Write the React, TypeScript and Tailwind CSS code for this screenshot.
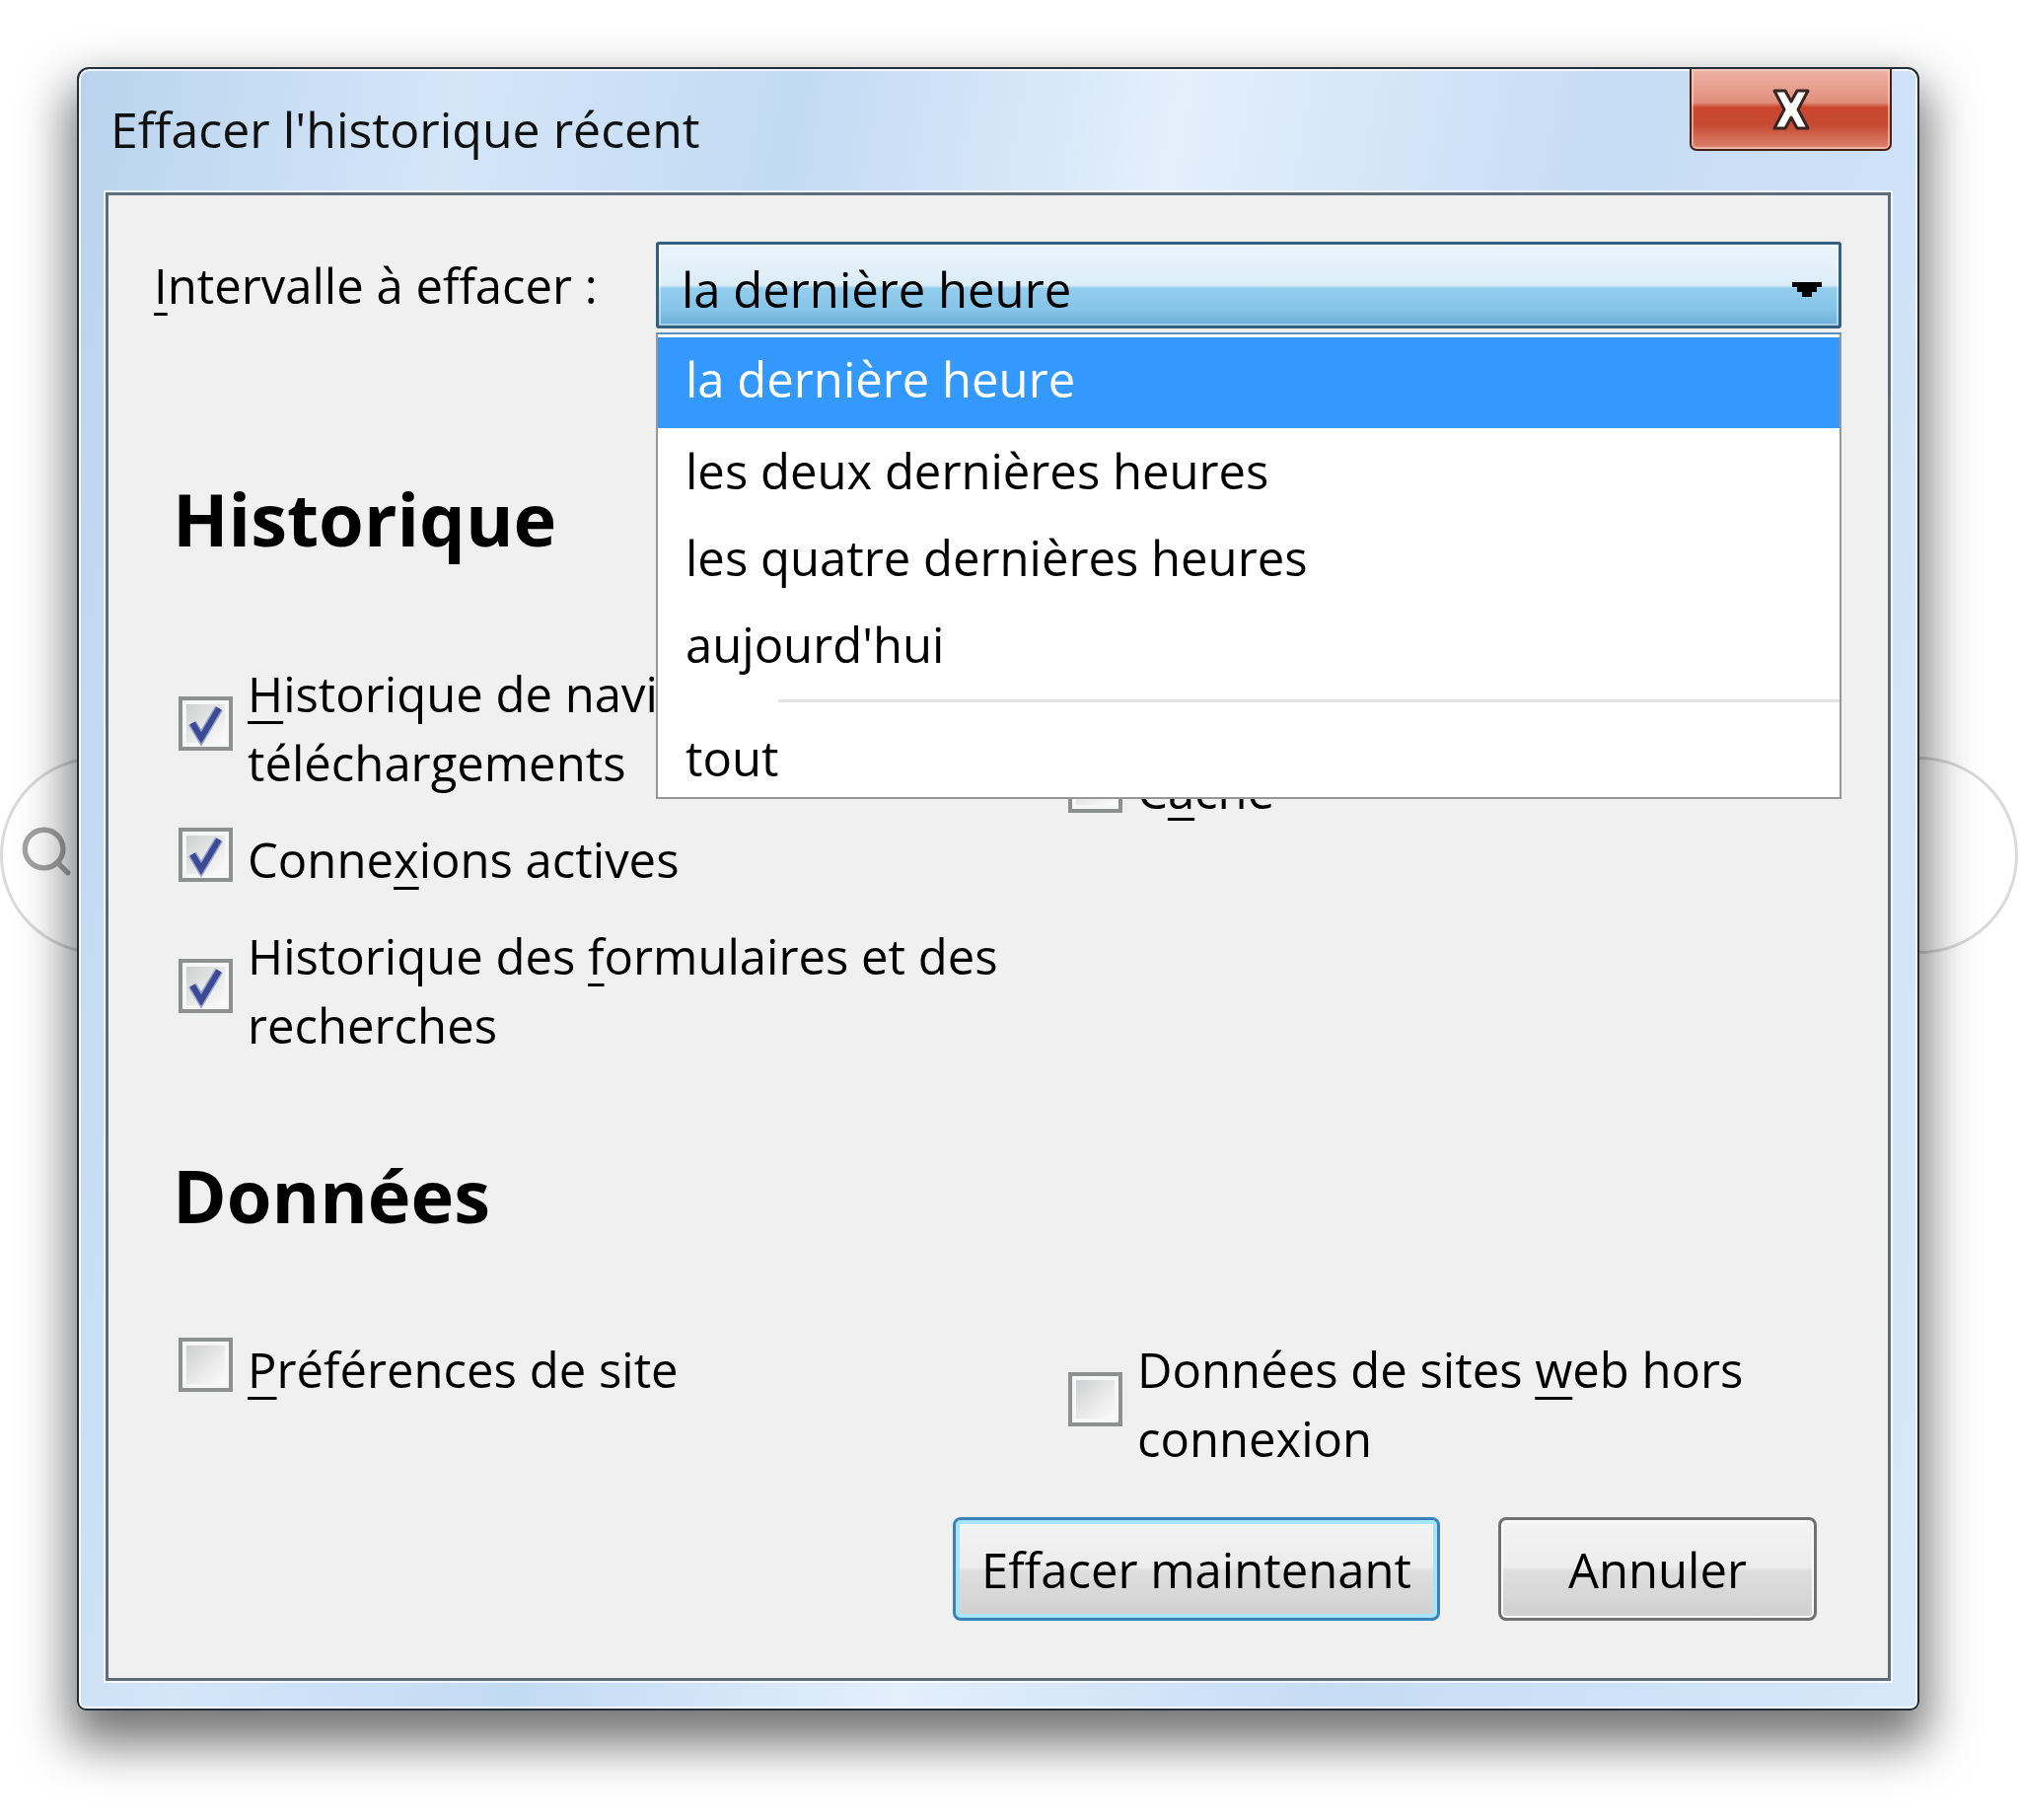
import { Search } from "lucide-react";
import type { ReactNode } from "react";

function Box({ checked }: { checked?: boolean }) {
  return (
    <span className="relative mb-[10px] flex h-[55px] w-[55px] shrink-0 border-[4px] border-[#8e8f8f] bg-[#f6f6f6] p-[4px]">
      <span className="h-full w-full bg-[linear-gradient(135deg,#cdcecf,#e9e9e9_55%,#fbfbfb)]" />
      {checked ? (
        <svg viewBox="0 0 47 47" className="absolute inset-0 h-[47px] w-[47px]">
          <path d="M10 23 L19 38 L37 8" fill="none" stroke="#9aa3cf" strokeWidth="9" strokeLinejoin="miter" />
          <path d="M10 23 L19 38 L37 8" fill="none" stroke="#3a4a95" strokeWidth="6" strokeLinejoin="miter" />
        </svg>
      ) : null}
    </span>
  );
}

function Option({ checked, children, textClass = "max-w-[800px]" }: { checked?: boolean; children: ReactNode; textClass?: string }) {
  return (
    <div className="flex items-center gap-[15px]">
      <Box checked={checked} />
      <span className={`leading-[70px] ${textClass}`}>{children}</span>
    </div>
  );
}

function Key({ children }: { children: ReactNode }) {
  return <u className="underline decoration-[3px] underline-offset-[9px]">{children}</u>;
}

function CloseButton() {
  return (
    <div className="flex h-[83px] w-[205px] items-center justify-center rounded-b-[7px] border-2 border-t-0 border-[#4a2119] bg-[linear-gradient(to_bottom,#eeb4a6_0%,#e08e7b_42%,#c9462c_48%,#c64b32_70%,#dd8471_100%)] shadow-[inset_0_0_0_2px_rgba(255,220,210,0.55)]">
      <svg viewBox="0 0 44 44" className="h-[44px] w-[44px]">
        <path d="M5 3 H16 L22 14 L28 3 H39 L29 22 L39 41 H28 L22 30 L16 41 H5 L15 22 Z" fill="#ffffff" stroke="#3b2522" strokeWidth="3" strokeLinejoin="round" />
      </svg>
    </div>
  );
}

function Dropdown() {
  return (
    <div className="relative w-[1202px]">
      <div className="flex h-[88px] items-center justify-between rounded-[3px] border-[3px] border-[#34607f] bg-[linear-gradient(to_bottom,#eaf5fc_0%,#dcedf8_50%,#92cdee_54%,#86c4e8_80%,#6cafd8_100%)] pl-[23px] pr-[17px] pt-[8px] shadow-[inset_0_0_0_2px_rgba(255,255,255,0.4)]">
        <span className="leading-[70px]">la dernière heure</span>
        <svg viewBox="0 0 30 15" className="h-[15px] w-[30px]">
          <path d="M0 0 H30 V5 H25 V10 H20 V15 H10 V10 H5 V5 H0 Z" fill="#000" />
        </svg>
      </div>
      <div className="absolute left-0 top-full z-10 mt-[4px] w-full border-2 border-[#979797] border-t-[#5a8fc4] bg-white pt-[3px]">
        <div className="flex h-[92px] items-center bg-[#3399ff] pb-[6px] pl-[28px] text-white">la dernière heure</div>
        <div className="flex h-[88px] items-center pl-[28px]">les deux dernières heures</div>
        <div className="flex h-[88px] items-center pl-[28px]">les quatre dernières heures</div>
        <div className="flex h-[88px] items-center pl-[28px]">aujourd'hui</div>
        <div className="ml-[122px] mt-[11px] h-[3px] bg-[#e3e3e3]" />
        <div className="flex h-[96px] items-center pl-[28px] pt-[18px]">tout</div>
      </div>
    </div>
  );
}

function Button({ children, primary, width }: { children: ReactNode; primary?: boolean; width: string }) {
  return (
    <button
      type="button"
      className={`flex h-[105px] items-center justify-center rounded-[8px] border-[3px] bg-[linear-gradient(to_bottom,#f4f4f4_0%,#ececec_48%,#dedede_52%,#d0d0d0_100%)] leading-[70px] text-black ${width} ${
        primary ? "border-[#3a83b8] shadow-[inset_0_0_0_4px_#a6e4f9]" : "border-[#707070] shadow-[inset_0_0_0_2px_#fbfbfb]"
      }`}
    >
      {children}
    </button>
  );
}

export default function App() {
  return (
    <div className="relative h-[1845px] w-[2048px] overflow-hidden bg-white pl-[78px] pt-[68px] font-['Open_Sans',sans-serif] text-[49px] text-black">
      {/* search box sitting behind the dialog */}
      <div className="absolute left-0 top-[767px] h-[200px] w-[2046px] rounded-full border-[3px] border-[#dadada]" />
      <Search className="absolute left-[18px] top-[834px] h-[58px] w-[58px] text-[#a3a3a3]" strokeWidth={2.2} />

      <div className="relative flex h-[1666px] w-[1868px] flex-col rounded-t-[12px] rounded-b-[9px] border-2 border-[#222d38] bg-[linear-gradient(100deg,#b9d3ee_0%,#d4e6f8_18%,#c2daf3_34%,#e3effb_52%,#c6dcf4_72%,#d6e8f9_100%)] shadow-[0_26px_50px_8px_rgba(0,0,0,0.55),inset_0_0_0_2px_rgba(255,255,255,0.75)]">
        <div className="flex h-[125px] items-start justify-between">
          <span className="ml-[32px] mt-[26px] text-[50px] leading-[70px] text-[#111]">Effacer l'historique récent</span>
          <div className="mr-[26px]">
            <CloseButton />
          </div>
        </div>

        <div className="mx-[27px] mb-[28px] flex flex-1 flex-col border-[3px] border-[#5f6d7b] bg-[#f0f0f0] pl-[46px] pr-[46px] pt-[47px] shadow-[0_0_0_2px_rgba(255,255,255,0.7)]">
          <div className="flex items-center">
            <span className="w-[509px] leading-[70px]">
              <Key>I</Key>ntervalle à effacer :
            </span>
            <Dropdown />
          </div>

          <h2 className="ml-[19px] mt-[150px] text-[74px] font-bold leading-[86px]">Historique</h2>

          <div className="ml-[25px] mt-[99px] grid grid-cols-[902px_1fr]">
            <div className="flex flex-col gap-[28px]">
              <Option checked>
                <Key>H</Key>istorique de navigation et des téléchargements
              </Option>
              <Option checked>
                Conne<Key>x</Key>ions actives
              </Option>
              <Option checked>
                Historique des <Key>f</Key>ormulaires et des recherches
              </Option>
            </div>
            <div className="flex flex-col gap-[28px]">
              <Option>
                C<Key>o</Key>okies
              </Option>
              <Option>
                C<Key>a</Key>che
              </Option>
            </div>
          </div>

          <h2 className="ml-[19px] mt-[95px] text-[74px] font-bold leading-[86px]">Données</h2>

          <div className="ml-[25px] mt-[98px] grid grid-cols-[902px_1fr] items-start">
            <Option>
              <Key>P</Key>références de site
            </Option>
            <Option textClass="max-w-[700px]">
              Données de sites <Key>w</Key>eb hors connexion
            </Option>
          </div>

          <div className="mr-[26px] mt-[45px] flex justify-end gap-[59px]">
            <Button primary width="w-[494px]">
              Effacer maintenant
            </Button>
            <Button width="w-[323px]">Annuler</Button>
          </div>
        </div>
      </div>
    </div>
  );
}
